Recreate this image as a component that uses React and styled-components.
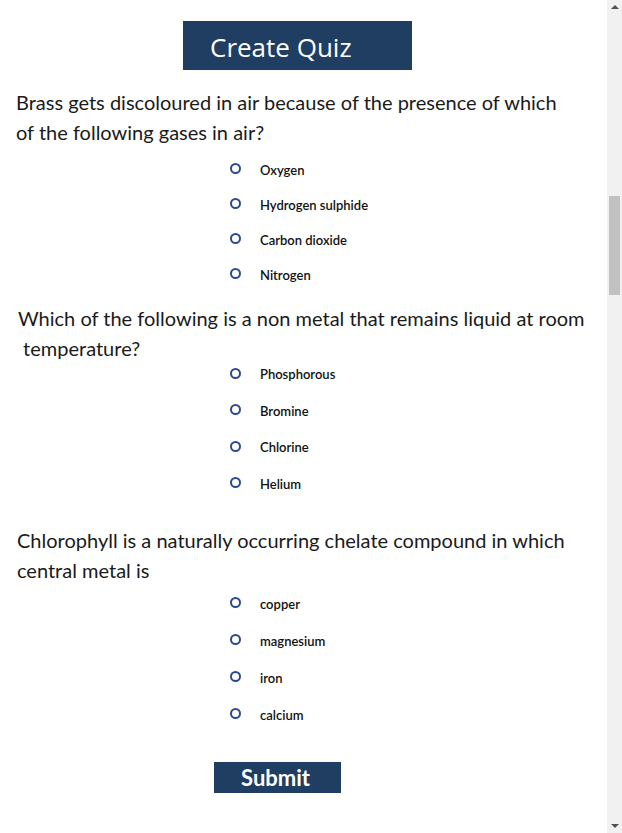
import styled, { createGlobalStyle } from "styled-components";

const GlobalStyle = createGlobalStyle`
	body {
		margin: 0;
		background: #ffffff;
		font-family: "Lato", "Open Sans", sans-serif;
		color: #222;
	}
`;

const quiz = [
	{
		lines: [
			"Brass gets discoloured in air because of the presence of which",
			"of the following gases in air?",
		],
		indent: 16,
		top: 18,
		listTop: 5,
		row: 35,
		options: ["Oxygen", "Hydrogen sulphide", "Carbon dioxide", "Nitrogen"],
	},
	{
		lines: [
			"Which of the following is a non metal that remains liquid at room",
			"\u00a0temperature?",
		],
		indent: 18,
		top: 12,
		listTop: -7,
		row: 36.5,
		options: ["Phosphorous", "Bromine", "Chlorine", "Helium"],
	},
	{
		lines: [
			"Chlorophyll is a naturally occurring chelate compound in which",
			"central metal is",
		],
		indent: 17,
		top: 24,
		listTop: 0,
		row: 37,
		options: ["copper", "magnesium", "iron", "calcium"],
	},
];

const App = () => {
	return (
		<>
			<GlobalStyle />
			<Page>
				<CreateButton type="button">Create Quiz</CreateButton>
				{quiz.map((q, i) => (
					<QuestionBlock key={i} $top={q.top}>
						<QuestionText $indent={q.indent}>
							{q.lines.map((line, j) => (
								<span key={j}>{line}</span>
							))}
						</QuestionText>
						<OptionList $top={q.listTop}>
							{q.options.map((opt) => (
								<Option key={opt} $row={q.row}>
									<Radio type="radio" name={`q${i}`} />
									<OptionLabel>{opt}</OptionLabel>
								</Option>
							))}
						</OptionList>
					</QuestionBlock>
				))}
				<SubmitButton type="button">Submit</SubmitButton>
			</Page>
			<ScrollTrack aria-hidden="true">
				<ScrollArrow $dir="up" />
				<ScrollThumb />
				<ScrollArrow $dir="down" />
			</ScrollTrack>
		</>
	);
};
export default App;

const Page = styled.main`
	display: flex;
	flex-direction: column;
	align-items: flex-start;
	width: 607px;
	padding-top: 21px;
	padding-bottom: 40px;
`;

const CreateButton = styled.button`
	margin-left: 183px;
	width: 229px;
	height: 49px;
	border: none;
	background: #1f3e62;
	color: #ffffff;
	font-family: "Open Sans", "Lato", sans-serif;
	font-size: 26px;
	font-weight: 400;
	text-align: left;
	padding: 2px 0 0 27px;
	cursor: pointer;
`;

const QuestionBlock = styled.section`
	width: 100%;
	margin-top: ${(p) => p.$top}px;
`;

const QuestionText = styled.p`
	margin: 0;
	padding-left: ${(p) => p.$indent}px;
	font-size: 20px;
	line-height: 29.5px;
	color: #1a1a1a;
	span {
		display: block;
		white-space: nowrap;
	}
`;

const OptionList = styled.div`
	display: flex;
	flex-direction: column;
	margin-top: ${(p) => p.$top}px;
	padding-left: 230px;
`;

const Option = styled.label`
	display: flex;
	align-items: center;
	height: ${(p) => p.$row}px;
	gap: 19px;
	cursor: pointer;
`;

const Radio = styled.input`
	appearance: none;
	margin: 0;
	width: 11px;
	height: 11px;
	border-radius: 50%;
	border: 2.5px solid #2c4a8c;
	box-sizing: border-box;
	background: #fff;
	margin-top: -2px;
`;

const OptionLabel = styled.span`
	font-family: "Lato", sans-serif;
	font-size: 13px;
	font-weight: 600;
	color: #111;
`;

const SubmitButton = styled.button`
	margin-top: 29px;
	margin-left: 214px;
	width: 127px;
	height: 31px;
	border: none;
	background: #1f3e62;
	color: #ffffff;
	font-family: "Lato", sans-serif;
	font-size: 22px;
	font-weight: 700;
	padding: 0 4px 0 0;
	cursor: pointer;
`;

const ScrollTrack = styled.div`
	position: fixed;
	top: 0;
	right: 0;
	width: 15px;
	height: 100vh;
	background: #f1f1f1;
	display: flex;
	flex-direction: column;
	align-items: center;
	justify-content: space-between;
`;

const ScrollThumb = styled.div`
	position: absolute;
	top: 196px;
	left: 2px;
	width: 11px;
	height: 99px;
	background: #c1c1c1;
`;

const ScrollArrow = styled.div`
	width: 0;
	height: 0;
	margin: 5px 0;
	border-left: 4px solid transparent;
	border-right: 4px solid transparent;
	${(p) =>
		p.$dir === "up"
			? "border-bottom: 4px solid #505050;"
			: "border-top: 4px solid #505050;"}
`;
